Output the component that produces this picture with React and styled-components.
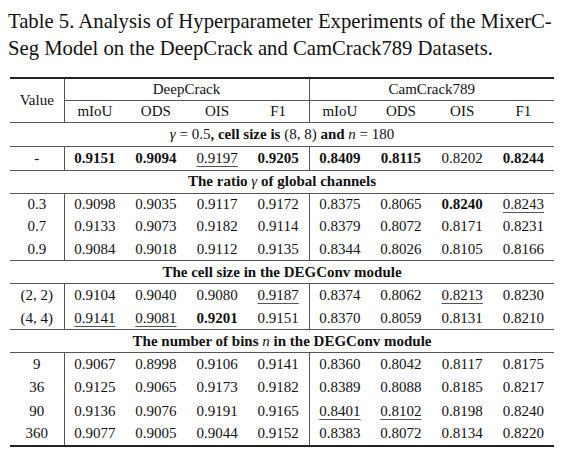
import React from "react";
import styled, { createGlobalStyle } from "styled-components";

const Global = createGlobalStyle`
  html, body { margin: 0; padding: 0; background: #fff; }
`;

const Page = styled.div`
  padding: 8px 0 0 8px;
  font-family: "Liberation Serif", "Times New Roman", serif;
  color: #111;
`;

const Caption = styled.div`
  font-size: 20.7px;
  line-height: 26.5px;
  white-space: nowrap;
`;

const Table = styled.table`
  margin: 16px 0 0 2px;
  width: 544px;
  border-collapse: collapse;
  table-layout: fixed;
  font-size: 15px;
  border-top: 2px solid #222;
  border-bottom: 2px solid #222;
`;

const Row = styled.tr`
  height: ${(p) => p.$h}px;
`;

const Cell = styled.td`
  padding: 0;
  text-align: center;
  vertical-align: middle;
  line-height: 1;
  white-space: nowrap;
  border-right: ${(p) => (p.$divider ? "1px solid #555" : "none")};
  border-bottom: ${(p) => (p.$rule ? "1px solid #555" : "none")};
`;

const SectionCell = styled.td`
  padding: 0;
  text-align: center;
  vertical-align: middle;
  line-height: 1;
  white-space: nowrap;
  font-weight: 700;
  border-top: 1px solid #555;
  border-bottom: 1px solid #555;
`;

const MathText = styled.span`
  font-weight: 400;
  font-style: ${(p) => (p.$italic ? "italic" : "normal")};
`;

const Under = styled.span`
  text-decoration: underline;
  text-decoration-color: #555;
  text-decoration-thickness: 1px;
  text-underline-offset: 3px;
`;

const Strong = styled.span`
  font-weight: 700;
`;

function Val({ v }) {
  if (v.startsWith("*")) return <Strong>{v.slice(1)}</Strong>;
  if (v.startsWith("_")) return <Under>{v.slice(1)}</Under>;
  return <>{v}</>;
}

function DataRow({ label, values, h = 23, rule }) {
  return (
    <Row $h={h}>
      <Cell $divider $rule={rule}>{label}</Cell>
      {values.map((v, i) => (
        <Cell key={i} $divider={i === 3} $rule={rule}>
          <Val v={v} />
        </Cell>
      ))}
    </Row>
  );
}

function Section({ children, h = 23 }) {
  return (
    <Row $h={h}>
      <SectionCell colSpan={9}>{children}</SectionCell>
    </Row>
  );
}

const ratioRows = [
  ["0.3", ["0.9098", "0.9035", "0.9117", "0.9172", "0.8375", "0.8065", "*0.8240", "_0.8243"]],
  ["0.7", ["0.9133", "0.9073", "0.9182", "0.9114", "0.8379", "0.8072", "0.8171", "0.8231"]],
  ["0.9", ["0.9084", "0.9018", "0.9112", "0.9135", "0.8344", "0.8026", "0.8105", "0.8166"]],
];

const cellRows = [
  ["(2, 2)", ["0.9104", "0.9040", "0.9080", "_0.9187", "0.8374", "0.8062", "_0.8213", "0.8230"]],
  ["(4, 4)", ["_0.9141", "_0.9081", "*0.9201", "0.9151", "0.8370", "0.8059", "0.8131", "0.8210"]],
];

const binRows = [
  ["9", ["0.9067", "0.8998", "0.9106", "0.9141", "0.8360", "0.8042", "0.8117", "0.8175"]],
  ["36", ["0.9125", "0.9065", "0.9173", "0.9182", "0.8389", "0.8088", "0.8185", "0.8217"]],
  ["90", ["0.9136", "0.9076", "0.9191", "0.9165", "_0.8401", "_0.8102", "0.8198", "0.8240"]],
  ["360", ["0.9077", "0.9005", "0.9044", "0.9152", "0.8383", "0.8072", "0.8134", "0.8220"]],
];

const metrics = ["mIoU", "ODS", "OIS", "F1"];

export default function App() {
  return (
    <Page>
      <Global />
      <Caption>
        Table 5. Analysis of Hyperparameter Experiments of the MixerC-
        <br />
        Seg Model on the DeepCrack and CamCrack789 Datasets.
      </Caption>
      <Table>
        <colgroup>
          <col style={{ width: 54 }} />
          {Array.from({ length: 8 }).map((_, i) => (
            <col key={i} style={{ width: 61.25 }} />
          ))}
        </colgroup>
        <tbody>
          <Row $h={22}>
            <Cell rowSpan={2} $divider $rule>Value</Cell>
            <Cell colSpan={4} $divider $rule>DeepCrack</Cell>
            <Cell colSpan={4} $rule>CamCrack789</Cell>
          </Row>
          <Row $h={22}>
            {metrics.map((m, i) => (
              <Cell key={"d" + m} $divider={i === 3} $rule>{m}</Cell>
            ))}
            {metrics.map((m) => (
              <Cell key={"c" + m} $rule>{m}</Cell>
            ))}
          </Row>
          <Section h={24}>
            <MathText $italic>γ</MathText> <MathText>= 0.5</MathText>, cell size is{" "}
            <MathText>(8, 8)</MathText> and <MathText $italic>n</MathText>{" "}
            <MathText>= 180</MathText>
          </Section>
          <DataRow
            label="-"
            h={24}
            values={["*0.9151", "*0.9094", "_0.9197", "*0.9205", "*0.8409", "*0.8115", "0.8202", "*0.8244"]}
          />
          <Section>
            The ratio <MathText $italic>γ</MathText> of global channels
          </Section>
          {ratioRows.map(([l, v]) => (
            <DataRow key={l} label={l} values={v} h={22.67} />
          ))}
          <Section>The cell size in the DEGConv module</Section>
          {cellRows.map(([l, v]) => (
            <DataRow key={l} label={l} values={v} />
          ))}
          <Section>
            The number of bins <MathText $italic>n</MathText> in the DEGConv module
          </Section>
          {binRows.map(([l, v]) => (
            <DataRow key={l} label={l} values={v} h={23.25} />
          ))}
        </tbody>
      </Table>
    </Page>
  );
}
